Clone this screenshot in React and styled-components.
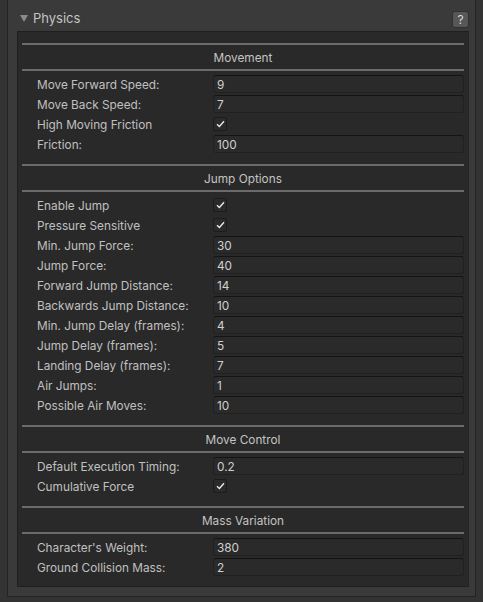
import React from 'react'
import styled, { createGlobalStyle } from 'styled-components'

const GlobalStyle = createGlobalStyle`
  html, body {
    margin: 0;
    padding: 0;
    background: #333333;
    font-family: Inter, "Noto Sans", sans-serif;
    -webkit-font-smoothing: antialiased;
  }
`

const sections = [
  {
    title: 'Movement',
    rows: [
      { label: 'Move Forward Speed:', value: '9' },
      { label: 'Move Back Speed:', value: '7' },
      { label: 'High Moving Friction', check: true },
      { label: 'Friction:', value: '100' },
    ],
  },
  {
    title: 'Jump Options',
    rows: [
      { label: 'Enable Jump', check: true },
      { label: 'Pressure Sensitive', check: true },
      { label: 'Min. Jump Force:', value: '30' },
      { label: 'Jump Force:', value: '40' },
      { label: 'Forward Jump Distance:', value: '14' },
      { label: 'Backwards Jump Distance:', value: '10' },
      { label: 'Min. Jump Delay (frames):', value: '4' },
      { label: 'Jump Delay (frames):', value: '5' },
      { label: 'Landing Delay (frames):', value: '7' },
      { label: 'Air Jumps:', value: '1' },
      { label: 'Possible Air Moves:', value: '10' },
    ],
  },
  {
    title: 'Move Control',
    rows: [
      { label: 'Default Execution Timing:', value: '0.2' },
      { label: 'Cumulative Force', check: true },
    ],
  },
  {
    title: 'Mass Variation',
    rows: [
      { label: "Character's Weight:", value: '380' },
      { label: 'Ground Collision Mass:', value: '2' },
    ],
  },
]

const CheckMark = () => (
  <svg width="9" height="8" viewBox="0 0 9 8">
    <path d="M1 4.3 L3.4 6.5 L8 1.3" fill="none" stroke="#e8e8e8" strokeWidth="1.4" />
  </svg>
)

const App = () => {
  return (
    <>
      <GlobalStyle />
      <Frame>
        <Header>
          <Foldout>
            <Triangle />
            <span>Physics</span>
          </Foldout>
          <HelpButton>?</HelpButton>
        </Header>
        <Panel>
          {sections.map((section, i) => (
            <Section key={section.title} last={i === sections.length - 1}>
              <Rule />
              <SectionTitle>{section.title}</SectionTitle>
              <Rule />
              <Rows>
                {section.rows.map((row) => (
                  <Row key={row.label}>
                    <Label>{row.label}</Label>
                    {row.check ? (
                      <CheckBox>
                        <CheckMark />
                      </CheckBox>
                    ) : (
                      <Field>{row.value}</Field>
                    )}
                  </Row>
                ))}
              </Rows>
            </Section>
          ))}
        </Panel>
      </Frame>
    </>
  )
}

export default App

const Frame = styled.div`
  box-sizing: border-box;
  margin-left: 7px;
  width: 469px;
  height: 597px;
  background: #3a3a3a;
  border: 1px solid #232323;
  border-top: none;
  padding: 0 6px 0 9px;
`

const Header = styled.div`
  display: flex;
  align-items: flex-start;
  justify-content: space-between;
  height: 31px;
  padding: 0 0 0 3px;
  box-sizing: border-box;
`

const Foldout = styled.div`
  display: flex;
  align-items: center;
  gap: 5px;
  color: #c4c4c4;
  font-size: 13px;
  height: 16px;
  margin-top: 10px;
`

const Triangle = styled.span`
  width: 0;
  height: 0;
  border-left: 4px solid transparent;
  border-right: 4px solid transparent;
  border-top: 7px solid #8a8a8a;
`

const HelpButton = styled.div`
  box-sizing: border-box;
  width: 17px;
  height: 17px;
  margin-top: 11px;
  border-radius: 3px;
  background: #575757;
  border: 1px solid #303030;
  color: #d8d8d8;
  font-size: 12px;
  display: flex;
  align-items: center;
  justify-content: center;
`

const Panel = styled.div`
  box-sizing: border-box;
  background: #292929;
  border: 1px solid #1f1f1f;
  border-right-color: #242424;
  width: 452px;
  height: 556px;
  padding: 11px 4px 0 4px;
  display: flex;
  flex-direction: column;
`

const Section = styled.div`
  display: flex;
  flex-direction: column;
  padding-bottom: ${(p) => (p.last ? '7px' : '10px')};
`

const Rule = styled.div`
  height: 2px;
  background: #6b6b6b;
`

const SectionTitle = styled.div`
  box-sizing: border-box;
  height: 24px;
  padding-top: 2px;
  display: flex;
  align-items: center;
  justify-content: center;
  color: #c4c4c4;
  font-size: 11.8px;
`

const Rows = styled.div`
  display: flex;
  flex-direction: column;
  padding-top: 3px;
`

const Row = styled.div`
  display: flex;
  align-items: center;
  height: 20px;
  padding-left: 15px;
`

const Label = styled.div`
  width: 176px;
  flex-shrink: 0;
  padding-top: 2px;
  color: #c0c0c0;
  font-size: 11.8px;
  white-space: nowrap;
`

const Field = styled.div`
  box-sizing: border-box;
  flex: 1;
  height: 18px;
  background: #2a2a2a;
  border: 1px solid #212121;
  border-top-color: #141414;
  border-radius: 3px;
  color: #d0d0d0;
  font-size: 11.8px;
  padding: 2px 0 0 3px;
  display: flex;
  align-items: center;
`

const CheckBox = styled.div`
  box-sizing: border-box;
  width: 14px;
  height: 14px;
  background: #2a2a2a;
  border: 1px solid #1c1c1c;
  border-radius: 2px;
  display: flex;
  align-items: center;
  justify-content: center;
`
